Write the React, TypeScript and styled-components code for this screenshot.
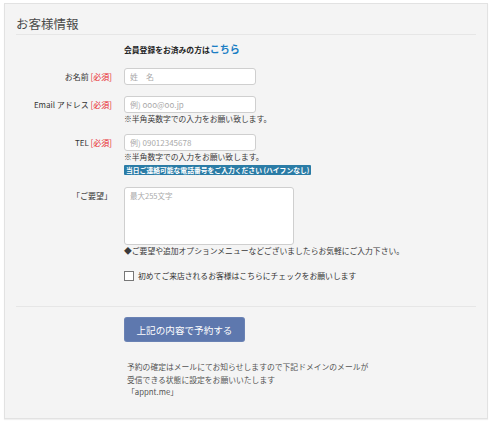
import styled, { createGlobalStyle } from 'styled-components';

const GlobalStyle = createGlobalStyle`
  html, body {
    margin: 0;
    padding: 0;
    background: #ffffff;
    font-family: "Noto Sans CJK JP", "Noto Sans", sans-serif;
    color: #333;
  }
`;

const Panel = styled.section`
  margin: 3px 12px 11px 4px;
  padding: 10px 11px 19px 11px;
  background: #f4f4f4;
  border: 1px solid #e2e2e2;
  box-shadow: 0 1px 1px rgba(0, 0, 0, 0.06);
`;

const Title = styled.h2`
  margin: 0;
  font-size: 12.5px;
  line-height: 20px;
  font-weight: 400;
  color: #4a4a4a;
  border-bottom: 1px solid #e6e6e6;
`;

const Form = styled.div`
  display: flex;
  flex-direction: column;
  padding: 7px 0 24px;
  border-bottom: 1px solid #e6e6e6;
`;

const Row = styled.div<{ $mt?: number }>`
  display: grid;
  grid-template-columns: 96px 1fr;
  column-gap: 12px;
  align-items: start;
  margin-top: ${({ $mt }) => $mt ?? 0}px;
`;

const Label = styled.div`
  text-align: right;
  font-size: 8px;
  line-height: 17px;
  color: #333;
  white-space: nowrap;
`;

const Required = styled.span`
  color: #e8242a;
`;

const Field = styled.div`
  display: flex;
  flex-direction: column;
  align-items: flex-start;
`;

const Member = styled.div`
  font-size: 7.8px;
  line-height: 14px;
  font-weight: 700;
  color: #222;

  a {
    color: #1a7ec4;
    font-size: 10px;
    text-decoration: none;
  }
`;

const Input = styled.input`
  box-sizing: border-box;
  width: 132px;
  height: 17px;
  padding: 0 5px;
  border: 1px solid #cfcfcf;
  border-radius: 3px;
  background: #fff;
  font-family: inherit;
  font-size: 8px;
  outline: none;

  &::placeholder {
    color: #aaa;
  }
`;

const TextArea = styled.textarea`
  box-sizing: border-box;
  width: 170px;
  height: 58px;
  padding: 3px 5px;
  border: 1px solid #cfcfcf;
  border-radius: 3px;
  background: #fff;
  font-family: inherit;
  font-size: 7.5px;
  line-height: 10px;
  resize: none;
  outline: none;

  &::placeholder {
    color: #aaa;
  }
`;

const Note = styled.div`
  font-size: 7.8px;
  line-height: 12px;
  color: #3a3a3a;
  white-space: nowrap;
`;

const Badge = styled.div`
  margin-top: 2px;
  padding: 0 2px;
  height: 10px;
  line-height: 10px;
  font-size: 6.8px;
  font-weight: 700;
  color: #fff;
  background: #2b7ca6;
  border-radius: 1px;
  white-space: nowrap;
`;

const CheckLabel = styled.label`
  display: flex;
  align-items: center;
  gap: 4px;
  font-size: 7.8px;
  line-height: 12px;
  color: #333;
`;

const Box = styled.span`
  display: inline-block;
  box-sizing: border-box;
  width: 10px;
  height: 10px;
  border: 1px solid #777;
  background: #fff;
`;

const Footer = styled.div`
  padding: 10px 0 0 108px;
`;

const SubmitButton = styled.button`
  display: block;
  width: 121px;
  height: 25px;
  border: none;
  border-radius: 3px;
  background: #5e78ae;
  color: #fff;
  font-family: inherit;
  font-size: 9.6px;
  white-space: nowrap;
  cursor: pointer;
  box-shadow: inset 0 0 0 1px rgba(255, 255, 255, 0.08);
`;

const Info = styled.p`
  margin: 19px 0 0 3px;
  font-size: 7.8px;
  line-height: 12.5px;
  color: #555;
`;

export default function App() {
  return (
    <>
      <GlobalStyle />
      <Panel>
        <Title>お客様情報</Title>
        <Form>
          <Row>
            <span />
            <Member>
              会員登録をお済みの方は<a href="#">こちら</a>
            </Member>
          </Row>

          <Row $mt={11}>
            <Label>
              お名前 <Required>[必須]</Required>
            </Label>
            <Field>
              <Input placeholder="姓　名" />
            </Field>
          </Row>

          <Row $mt={11}>
            <Label>
              Email アドレス <Required>[必須]</Required>
            </Label>
            <Field>
              <Input placeholder="例) ooo@oo.jp" />
              <Note>※半角英数字での入力をお願い致します。</Note>
            </Field>
          </Row>

          <Row $mt={9}>
            <Label>
              TEL <Required>[必須]</Required>
            </Label>
            <Field>
              <Input placeholder="例) 09012345678" />
              <Note>※半角数字での入力をお願い致します。</Note>
              <Badge>当日ご連絡可能な電話番号をご入力ください (ハイフンなし)</Badge>
            </Field>
          </Row>

          <Row $mt={12}>
            <Label>「ご要望」</Label>
            <Field>
              <TextArea placeholder="最大255文字" />
              <Note>◆ご要望や追加オプションメニューなどございましたらお気軽にご入力下さい。</Note>
            </Field>
          </Row>

          <Row $mt={13}>
            <span />
            <CheckLabel>
              <Box />
              初めてご来店されるお客様はこちらにチェックをお願いします
            </CheckLabel>
          </Row>
        </Form>

        <Footer>
          <SubmitButton>上記の内容で予約する</SubmitButton>
          <Info>
            予約の確定はメールにてお知らせしますので下記ドメインのメールが
            <br />
            受信できる状態に設定をお願いいたします
            <br />
            「appnt.me」
          </Info>
        </Footer>
      </Panel>
    </>
  );
}
